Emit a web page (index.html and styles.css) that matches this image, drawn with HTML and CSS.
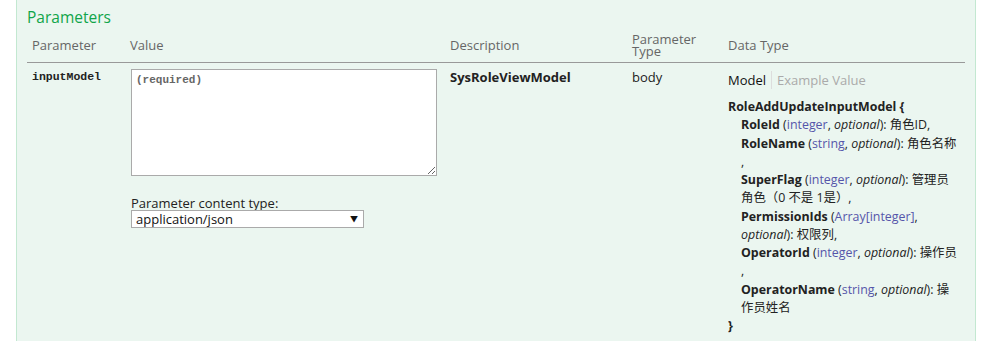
FILE: index.html
```html
<!DOCTYPE html>
<html lang="en">
<head>
    <meta charset="UTF-8">
    <title>Parameters</title>
    <link rel="stylesheet" href="styles.css">
</head>
<body>
    <div class="content">
        <h4>Parameters</h4>
        <table class="params">
            <colgroup>
                <col class="c-name">
                <col class="c-value">
                <col class="c-desc">
                <col class="c-type">
                <col class="c-data">
            </colgroup>
            <thead>
                <tr>
                    <th>Parameter</th>
                    <th>Value</th>
                    <th>Description</th>
                    <th>Parameter<br>Type</th>
                    <th>Data Type</th>
                </tr>
            </thead>
            <tbody>
                <tr>
                    <td class="code">inputModel</td>
                    <td>
                        <textarea class="body-textarea" placeholder="(required)"></textarea>
                        <div class="content-type">
                            <label for="ctype">Parameter content type:</label>
                            <div class="select-wrap">
                                <select id="ctype">
                                    <option>application/json</option>
                                    <option>text/json</option>
                                </select>
                                <span class="arrow">&#9660;</span>
                            </div>
                        </div>
                    </td>
                    <td class="strong">SysRoleViewModel</td>
                    <td>body</td>
                    <td>
                        <div class="signature-nav">
                            <span class="tab selected">Model</span>
                            <span class="tab">Example Value</span>
                        </div>
                        <div class="model">
                            <span class="strong">RoleAddUpdateInputModel {</span>
                            <div class="prop"><span class="prop-name">RoleId</span> (<span class="prop-type">integer</span>, <span class="prop-opt">optional</span>): <span class="prop-desc">角色ID</span>,</div>
                            <div class="prop"><span class="prop-name">RoleName</span> (<span class="prop-type">string</span>, <span class="prop-opt">optional</span>): <span class="prop-desc">角色名称</span><br>,</div>
                            <div class="prop"><span class="prop-name">SuperFlag</span> (<span class="prop-type">integer</span>, <span class="prop-opt">optional</span>): <span class="prop-desc">管理员<br>角色（0 不是 1是）</span>,</div>
                            <div class="prop"><span class="prop-name">PermissionIds</span> (<span class="prop-type">Array[integer]</span>,<br><span class="prop-opt">optional</span>): <span class="prop-desc">权限列</span>,</div>
                            <div class="prop"><span class="prop-name">OperatorId</span> (<span class="prop-type">integer</span>, <span class="prop-opt">optional</span>): <span class="prop-desc">操作员</span><br>,</div>
                            <div class="prop"><span class="prop-name">OperatorName</span> (<span class="prop-type">string</span>, <span class="prop-opt">optional</span>): <span class="prop-desc">操<br>作员姓名</span></div>
                            <span class="strong">}</span>
                        </div>
                    </td>
                </tr>
            </tbody>
        </table>
    </div>
</body>
</html>
```

FILE: styles.css
```css
body {
    margin: 0;
    font-family: "Open Sans", "Noto Sans CJK SC", sans-serif;
    font-size: 13px;
    color: #222;
    background-color: #fff;
}

.content {
    margin-left: 16px;
    width: 938px;
    min-height: 360px;
    padding: 7px 10px 20px;
    background-color: #ebf6f0;
    border-left: 1px solid #c3e8d1;
    border-right: 1px solid #c3e8d1;
}

h4 {
    margin: 0 0 1px;
    font-size: 15.5px;
    font-weight: normal;
    line-height: 20px;
    color: #10a54a;
}

.params {
    width: 938px;
    table-layout: fixed;
    border-collapse: collapse;
}

.c-name { width: 98px; }
.c-value { width: 320px; }
.c-desc { width: 182px; }
.c-type { width: 96px; }
.c-data { width: 242px; }

.params th {
    padding: 5px;
    text-align: left;
    vertical-align: middle;
    font-size: 13px;
    font-weight: normal;
    line-height: 12px;
    color: #666;
    border-bottom: 1px solid #999;
}

.params td {
    padding: 6px 5px;
    vertical-align: top;
    line-height: 16px;
}

.code {
    font-family: "Liberation Mono", monospace;
    font-size: 11.5px;
    font-weight: bold;
}

.strong {
    font-weight: bold;
}

.body-textarea {
    display: block;
    box-sizing: border-box;
    width: 306px;
    height: 107px;
    margin: 0 0 0 1px;
    padding: 4px;
    border: 1px solid #aaa;
    background-color: #fff;
    font-family: "Liberation Mono", monospace;
    font-size: 11px;
}

.body-textarea::placeholder {
    color: #666;
    font-weight: bold;
}

.content-type {
    margin-top: 20px;
    margin-left: 1px;
}

.content-type label {
    display: block;
    line-height: 14px;
}

.select-wrap {
    position: relative;
    width: 233px;
}

.select-wrap select {
    appearance: none;
    width: 100%;
    height: 18px;
    margin: 0;
    padding: 0 4px;
    border: 1px solid #aaa;
    border-radius: 0;
    background-color: #fff;
    font-family: "Open Sans", sans-serif;
    font-size: 13px;
    line-height: 16px;
    color: #111;
}

.select-wrap .arrow {
    position: absolute;
    right: 6px;
    top: 3px;
    font-size: 8px;
    line-height: 12px;
    color: #111;
    pointer-events: none;
}

.signature-nav {
    display: flex;
    padding-top: 2px;
    line-height: 18px;
}

.signature-nav .tab {
    font-size: 13px;
    color: #aaa;
    padding-right: 5px;
}

.signature-nav .tab.selected {
    color: #111;
    border-right: 1px solid #ddd;
    margin-right: 5px;
}

.model {
    margin-top: 9px;
    font-size: 12.4px;
    line-height: 18.25px;
    color: #222;
}

.prop {
    margin-left: 13px;
    white-space: nowrap;
}

.prop-name {
    font-weight: bold;
}

.prop-type {
    color: #55a;
}

.prop-opt {
    font-style: italic;
}
```
